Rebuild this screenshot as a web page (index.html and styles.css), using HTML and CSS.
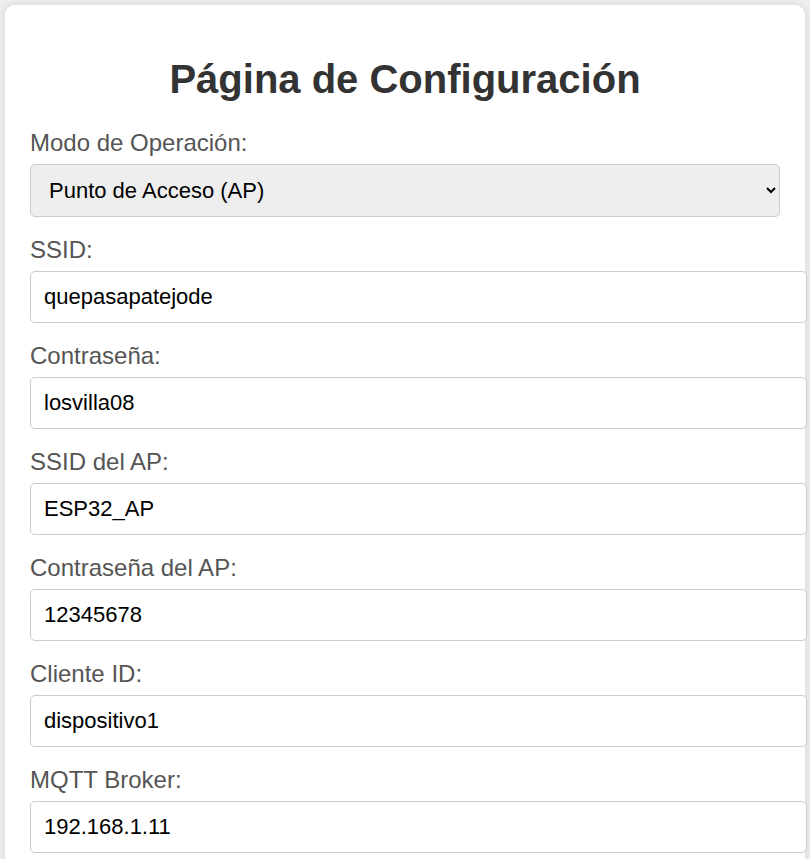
FILE: index.html
```html
<!DOCTYPE html>
<html lang="es">
<head>
<meta charset="utf-8">
<title>Página de Configuración</title>
<link rel="stylesheet" href="styles.css">
</head>
<body>
<div class="card">
  <h1 class="title">Página de Configuración</h1>
  <form class="form">
    <label class="label" for="modo">Modo de Operación:</label>
    <select class="select" id="modo">
      <option>Punto de Acceso (AP)</option>
      <option>Estación (STA)</option>
    </select>

    <label class="label" for="ssid">SSID:</label>
    <input class="input" id="ssid" type="text" value="quepasapatejode">

    <label class="label" for="pass">Contraseña:</label>
    <input class="input" id="pass" type="text" value="losvilla08">

    <label class="label" for="apssid">SSID del AP:</label>
    <input class="input" id="apssid" type="text" value="ESP32_AP">

    <label class="label" for="appass">Contraseña del AP:</label>
    <input class="input" id="appass" type="text" value="12345678">

    <label class="label" for="client">Cliente ID:</label>
    <input class="input" id="client" type="text" value="dispositivo1">

    <label class="label" for="broker">MQTT Broker:</label>
    <input class="input" id="broker" type="text" value="192.168.1.11">
  </form>
</div>
</body>
</html>
```
FILE: styles.css
```css
html, body {
  margin: 0;
}
body {
  padding: 5px;
  background: #eeeeee;
  font-family: "Liberation Sans", Arial, sans-serif;
}
.card {
  width: 800px;
  box-sizing: border-box;
  padding: 25px;
  background: #ffffff;
  border-radius: 10px;
  box-shadow: 0 0 10px rgba(0, 0, 0, 0.1);
}
.title {
  margin: 26.8px 0;
  font-size: 40px;
  font-weight: bold;
  color: #333333;
  text-align: center;
}
.form {
  display: flex;
  flex-direction: column;
  align-items: flex-start;
}
.label {
  display: block;
  margin-bottom: 7px;
  font-size: 24px;
  color: #555555;
}
.select {
  width: 750px;
  height: 53px;
  margin: 0 0 19px;
  padding: 0 12px 0 14px;
  font-family: "Liberation Sans", Arial, sans-serif;
  font-size: 22px;
  color: #000000;
  background-color: #eeeeee;
  border: 1px solid #cccccc;
  border-radius: 5px;
}
.input {
  width: 750px;
  margin: 0 0 19px;
  padding: 12px 12px 12px 13px;
  font-family: "Liberation Sans", Arial, sans-serif;
  font-size: 22px;
  line-height: 26px;
  color: #000000;
  background: #ffffff;
  border: 1px solid #cccccc;
  border-radius: 5px;
}
```
